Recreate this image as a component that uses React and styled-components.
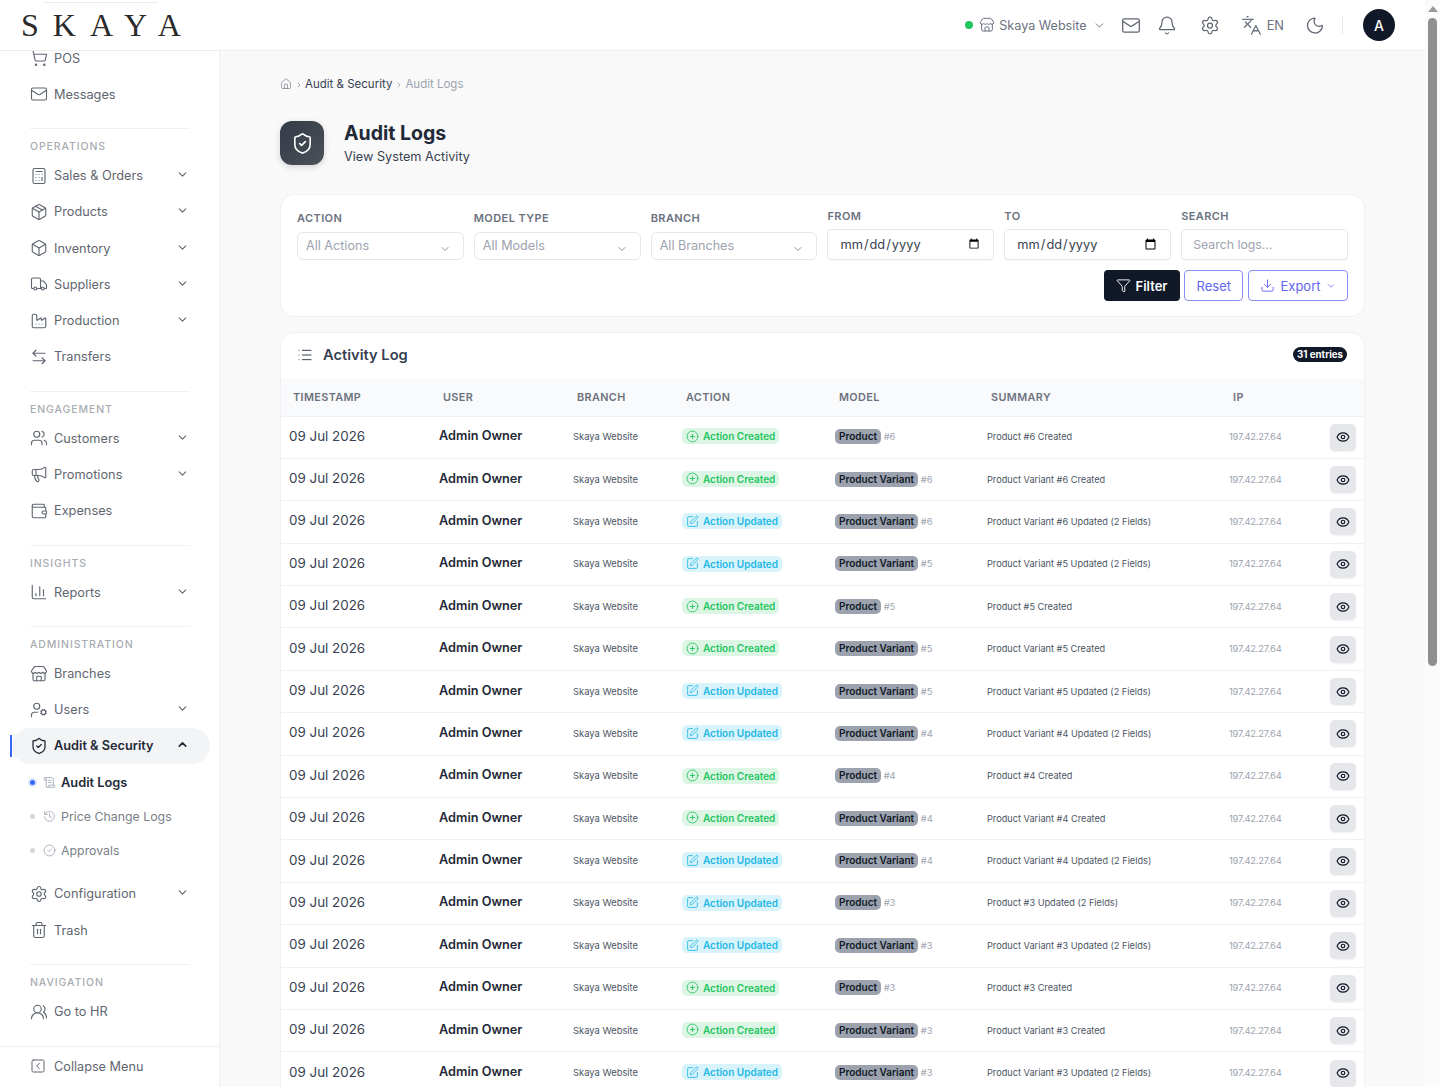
import React from 'react';
import styled, { createGlobalStyle } from 'styled-components';
import {
  ShoppingCart, Mail, Calculator, Package, Box, Truck, Factory, ArrowLeftRight, Users, Megaphone,
  Wallet, ChartColumn, Store, UserCog, ShieldCheck, ScrollText, History, CircleCheck, Settings,
  Trash2, UsersRound, SquareChevronLeft, ChevronDown, ChevronUp, ChevronRight, Bell, Languages,
  Moon, House, List, CirclePlus, SquarePen, Eye, Funnel, Download,
} from 'lucide-react';

const GlobalStyle = createGlobalStyle`
  html, body {
    margin: 0;
    height: 100%;
    overflow: hidden;
    font-family: Inter, "Liberation Sans", sans-serif;
  }
  * { box-sizing: border-box; }
`;

const NavItem = ({ icon: Icon, label, arrow }) => (
  <NavRow>
    <Icon size={18} strokeWidth={1.5} />
    <NavLabel>{label}</NavLabel>
    {arrow && <NavChevron><ChevronDown size={13} strokeWidth={2} /></NavChevron>}
  </NavRow>
);

const SubItem = ({ icon: Icon, label, active }) => (
  <SubRow $active={active}>
    <Dot $active={active} />
    <Icon size={13} strokeWidth={1.5} />
    <span>{label}</span>
  </SubRow>
);

const Sidebar = () => (
  <Side>
    <SideScroll>
      <NavItem icon={ShoppingCart} label="POS" />
      <NavItem icon={Mail} label="Messages" />
      <Section>
        <SectionLabel>Operations</SectionLabel>
        <NavItem icon={Calculator} label="Sales & Orders" arrow />
        <NavItem icon={Package} label="Products" arrow />
        <NavItem icon={Box} label="Inventory" arrow />
        <NavItem icon={Truck} label="Suppliers" arrow />
        <NavItem icon={Factory} label="Production" arrow />
        <NavItem icon={ArrowLeftRight} label="Transfers" />
      </Section>
      <Section>
        <SectionLabel>Engagement</SectionLabel>
        <NavItem icon={Users} label="Customers" arrow />
        <NavItem icon={Megaphone} label="Promotions" arrow />
        <NavItem icon={Wallet} label="Expenses" />
      </Section>
      <Section>
        <SectionLabel>Insights</SectionLabel>
        <NavItem icon={ChartColumn} label="Reports" arrow />
      </Section>
      <Section>
        <SectionLabel>Administration</SectionLabel>
        <NavItem icon={Store} label="Branches" />
        <NavItem icon={UserCog} label="Users" arrow />
        <ActiveRow>
          <ShieldCheck size={18} strokeWidth={1.7} />
          <NavLabel>Audit & Security</NavLabel>
          <NavChevron><ChevronUp size={13} strokeWidth={3} /></NavChevron>
        </ActiveRow>
        <SubList>
          <SubItem icon={ScrollText} label="Audit Logs" active />
          <SubItem icon={History} label="Price Change Logs" />
          <SubItem icon={CircleCheck} label="Approvals" />
        </SubList>
        <NavItem icon={Settings} label="Configuration" arrow />
        <NavItem icon={Trash2} label="Trash" />
      </Section>
      <Section>
        <SectionLabel>Navigation</SectionLabel>
        <NavItem icon={UsersRound} label="Go to HR" />
      </Section>
    </SideScroll>
    <CollapseBar>
      <SquareChevronLeft size={16} strokeWidth={1.5} />
      <span>Collapse Menu</span>
    </CollapseBar>
  </Side>
);

const Topbar = () => (
  <Header>
    <Logo>SKAYA</Logo>
    <HeaderTools>
      <BranchPick>
        <GreenDot />
        <Store size={16} strokeWidth={1.5} />
        <span>Skaya Website</span>
        <BranchChevron><ChevronDown size={13} strokeWidth={1.8} /></BranchChevron>
      </BranchPick>
      <ToolIcon $gap={16}><Mail size={21} strokeWidth={1.5} /></ToolIcon>
      <ToolIcon $gap={23}><Bell size={21} strokeWidth={1.5} /></ToolIcon>
      <ToolIcon $gap={21}><Settings size={21} strokeWidth={1.5} /></ToolIcon>
      <LangPick>
        <Languages size={21} strokeWidth={1.5} />
        <span>EN</span>
      </LangPick>
      <ToolIcon $gap={17}><Moon size={21} strokeWidth={1.5} /></ToolIcon>
      <ToolDivider />
      <Avatar>A</Avatar>
    </HeaderTools>
  </Header>
);

const SelectField = ({ label, placeholder }) => (
  <Field>
    <FieldLabel $low>{label}</FieldLabel>
    <SelectWrap>
      <FakeSelect defaultValue="">
        <option value="">{placeholder}</option>
      </FakeSelect>
      <SelectArrow><ChevronDown size={12} strokeWidth={1.5} /></SelectArrow>
    </SelectWrap>
  </Field>
);

const FilterCard = () => (
  <FiltersCard>
    <FilterGrid>
      <SelectField label="Action" placeholder="All Actions" />
      <SelectField label="Model Type" placeholder="All Models" />
      <SelectField label="Branch" placeholder="All Branches" />
      <Field>
        <FieldLabel>From</FieldLabel>
        <TextInput type="date" />
      </Field>
      <Field>
        <FieldLabel>To</FieldLabel>
        <TextInput type="date" />
      </Field>
      <Field>
        <FieldLabel>Search</FieldLabel>
        <SearchInput type="text" placeholder="Search logs..." />
      </Field>
    </FilterGrid>
    <FilterActions>
      <DarkButton><Funnel size={15} strokeWidth={1.5} />Filter</DarkButton>
      <OutlineButton>Reset</OutlineButton>
      <ExportButton>
        <Download size={15} strokeWidth={1.5} />Export<ChevronDown size={10} strokeWidth={1.8} />
      </ExportButton>
    </FilterActions>
  </FiltersCard>
);

const logs = [
  ['created', 'Product', 6],
  ['created', 'Product Variant', 6],
  ['updated', 'Product Variant', 6],
  ['updated', 'Product Variant', 5],
  ['created', 'Product', 5],
  ['created', 'Product Variant', 5],
  ['updated', 'Product Variant', 5],
  ['updated', 'Product Variant', 4],
  ['created', 'Product', 4],
  ['created', 'Product Variant', 4],
  ['updated', 'Product Variant', 4],
  ['updated', 'Product', 3],
  ['updated', 'Product Variant', 3],
  ['created', 'Product', 3],
  ['created', 'Product Variant', 3],
  ['updated', 'Product Variant', 3],
];

const LogRow = ({ kind, model, id }) => {
  const created = kind === 'created';
  const Icon = created ? CirclePlus : SquarePen;
  return (
    <tr>
      <DateCell>09 Jul 2026</DateCell>
      <UserCell>Admin Owner</UserCell>
      <SmallCell>Skaya Website</SmallCell>
      <SmallCell>
        <ActionBadge $created={created}>
          <Icon size={13} strokeWidth={1.6} />
          {created ? 'Action Created' : 'Action Updated'}
        </ActionBadge>
      </SmallCell>
      <SmallCell>
        <ModelBadge>{model}</ModelBadge> <RefId>#{id}</RefId>
      </SmallCell>
      <SummaryCell>{`${model} #${id} ${created ? 'Created' : 'Updated (2 Fields)'}`}</SummaryCell>
      <IpCell>197.42.27.64</IpCell>
      <EyeCell>
        <EyeButton><Eye size={14} strokeWidth={2} /></EyeButton>
      </EyeCell>
    </tr>
  );
};

const LogTable = () => (
  <LogCard>
    <LogHead>
      <LogTitle><List size={16} strokeWidth={1.5} />Activity Log</LogTitle>
      <EntryCount>31 entries</EntryCount>
    </LogHead>
    <Table>
      <colgroup>
        <col width="150" /><col width="134" /><col width="109" /><col width="153" />
        <col width="152" /><col width="242" /><col width="100" /><col />
      </colgroup>
      <thead>
        <tr>
          {['Timestamp', 'User', 'Branch', 'Action', 'Model', 'Summary', 'IP', ''].map((h) => (
            <Th key={h}>{h}</Th>
          ))}
        </tr>
      </thead>
      <tbody>
        {logs.map(([kind, model, id], i) => (
          <LogRow key={i} kind={kind} model={model} id={id} />
        ))}
      </tbody>
    </Table>
  </LogCard>
);

const App = () => (
  <>
    <GlobalStyle />
    <Shell>
      <Page>
        <Topbar />
        <Body>
          <Sidebar />
          <Main>
            <Crumbs>
              <House size={12} strokeWidth={1.3} />
              <CrumbSep><ChevronRight size={8} strokeWidth={2} /></CrumbSep>
              <CrumbLink>Audit & Security</CrumbLink>
              <CrumbSep><ChevronRight size={8} strokeWidth={1.5} /></CrumbSep>
              <CrumbCurrent>Audit Logs</CrumbCurrent>
            </Crumbs>
            <TitleRow>
              <TitleIcon><ShieldCheck size={23} strokeWidth={1.7} /></TitleIcon>
              <div>
                <PageTitle>Audit Logs</PageTitle>
                <PageSub>View System Activity</PageSub>
              </div>
            </TitleRow>
            <FilterCard />
            <LogTable />
          </Main>
        </Body>
      </Page>
      <ScrollTrack>
        <ScrollArrow />
        <ScrollThumb />
      </ScrollTrack>
    </Shell>
  </>
);

const Shell = styled.div`
  display: flex;
  height: 100vh;
  overflow: hidden;
`;
const Page = styled.div`
  flex: 1;
  min-width: 0;
  display: flex;
  flex-direction: column;
`;
const ScrollTrack = styled.div`
  width: 15px;
  background: #fbfbfb;
  display: flex;
  flex-direction: column;
  align-items: center;
  padding-top: 6px;
`;
const ScrollArrow = styled.div`
  width: 0;
  height: 0;
  border-left: 5px solid transparent;
  border-right: 5px solid transparent;
  border-bottom: 6px solid #9a9a9a;
`;
const ScrollThumb = styled.div`
  width: 9px;
  height: 648px;
  margin-top: 6px;
  border-radius: 5px;
  background: #8f8f8f;
`;

const Header = styled.header`
  height: 51px;
  flex: none;
  display: flex;
  align-items: center;
  justify-content: space-between;
  background: #fff;
  border-bottom: 1px solid #eeeeee;
  padding: 0 30px 0 21px;
  overflow: hidden;
`;
const Logo = styled.div`
  position: relative;
  font-family: "Liberation Serif", serif;
  font-size: 32px;
  line-height: 46px;
  letter-spacing: 14px;
  color: #2a2a2a;
  &::before {
    content: '';
    position: absolute;
    left: 22px;
    top: 0;
    width: 115px;
    height: 49px;
    border-top: 1px solid #eeebe3;
    border-bottom: 1px solid #eeebe3;
  }
`;
const HeaderTools = styled.div`
  display: flex;
  align-items: center;
  color: #6b7280;
`;
const BranchPick = styled.div`
  display: flex;
  align-items: center;
  gap: 4px;
  font-size: 12.6px;
  color: #6b7280;
  margin-right: 15px;
`;
const BranchChevron = styled.span`
  display: flex;
  margin-left: 2px;
`;
const GreenDot = styled.span`
  width: 8px;
  height: 8px;
  border-radius: 50%;
  background: #22c55e;
  margin-right: 2px;
`;
const ToolIcon = styled.span`
  display: flex;
  width: 20px;
  justify-content: center;
  margin-right: ${(p) => p.$gap}px;
  color: #5f6670;
`;
const LangPick = styled.div`
  display: flex;
  align-items: center;
  gap: 5px;
  font-size: 12.8px;
  margin-right: 21px;
  color: #6b7280;
`;
const ToolDivider = styled.span`
  width: 1px;
  height: 18px;
  background: #e5e7eb;
  margin-right: 20px;
`;
const Avatar = styled.div`
  width: 32px;
  height: 32px;
  border-radius: 50%;
  background: #111827;
  color: #fff;
  font-size: 14px;
  font-weight: 500;
  display: flex;
  align-items: center;
  justify-content: center;
`;

const Body = styled.div`
  flex: 1;
  min-height: 0;
  display: flex;
`;
const Side = styled.aside`
  width: 220px;
  flex: none;
  display: flex;
  flex-direction: column;
  background: #fff;
  border-right: 1px solid #eeeeee;
`;
const SideScroll = styled.nav`
  flex: 1;
  min-height: 0;
  overflow: hidden;
  padding-right: 9px;
  & > :first-child { margin-top: -11px; }
`;
const NavRow = styled.div`
  height: 36.2px;
  display: flex;
  align-items: center;
  gap: 6.5px;
  padding: 0 21px 0 29.5px;
  color: #5f6670;
  font-size: 12.75px;
`;
const NavLabel = styled.span`
  flex: 1;
`;
const NavChevron = styled.span`
  display: flex;
  margin-top: -2px;
`;
const ActiveRow = styled(NavRow)`
  position: relative;
  height: 36px;
  color: #1f2937;
  font-weight: 600;
  background: #f3f4f6;
  border-radius: 18px;
  &::before {
    content: '';
    position: absolute;
    left: -2px;
    top: 7px;
    width: 2px;
    height: 22px;
    background: #3b66f5;
  }
`;
const Section = styled.section`
  margin: 16px 20px 0 30px;
  padding-top: 9px;
  border-top: 1px solid #f1f1f3;
  & > ${NavRow} { margin-left: -30px; margin-right: -20px; }
  & > ${ActiveRow} { margin-left: -18px; padding-left: 17.5px; }
`;
const SectionLabel = styled.div`
  height: 19.3px;
  font-size: 10.5px;
  line-height: 18px;
  font-weight: 500;
  letter-spacing: 0.9px;
  text-transform: uppercase;
  color: #a8acb2;
`;
const SubList = styled.div`
  margin: 2px 0 8px;
`;
const SubRow = styled.div`
  height: 34px;
  display: flex;
  align-items: center;
  gap: 5px;
  font-size: ${(p) => (p.$active ? '12.8px' : '12.35px')};
  font-weight: ${(p) => (p.$active ? 600 : 400)};
  color: ${(p) => (p.$active ? '#1f2937' : '#7a7f87')};
  & > svg { color: #9ca3af; }
`;
const Dot = styled.span`
  width: 5px;
  height: 5px;
  border-radius: 50%;
  margin-right: 3px;
  background: ${(p) => (p.$active ? '#3b66f5' : '#d4d6da')};
  box-shadow: ${(p) => (p.$active ? '0 0 0 2px #dbe4fd' : 'none')};
`;
const CollapseBar = styled.div`
  height: 41px;
  flex: none;
  display: flex;
  align-items: center;
  gap: 8px;
  padding: 0 0 2px 30px;
  border-top: 1px solid #f1f1f3;
  color: #5f6670;
  font-size: 12.7px;
`;

const Main = styled.main`
  flex: 1;
  min-width: 0;
  overflow: hidden;
  background: #f9f9f9;
  padding: 0 60px;
`;
const Crumbs = styled.div`
  height: 65px;
  display: flex;
  align-items: center;
  gap: 2.5px;
  font-size: 11.5px;
  color: #6b7280;
`;
const CrumbSep = styled.span`
  display: flex;
  margin-top: 3px;
`;
const CrumbLink = styled.span`
  color: #374151;
`;
const CrumbCurrent = styled.span`
  color: #9ca3af;
`;
const TitleRow = styled.div`
  display: flex;
  align-items: center;
  gap: 20px;
  margin-top: 4px;
`;
const TitleIcon = styled.div`
  width: 44px;
  height: 44px;
  border-radius: 12px;
  background: linear-gradient(135deg, #343a46, #4b5159);
  box-shadow: 0 2px 6px rgba(0, 0, 0, 0.15);
  color: #fff;
  display: flex;
  align-items: center;
  justify-content: center;
`;
const PageTitle = styled.h1`
  margin: 0;
  font-size: 19.5px;
  line-height: 26px;
  font-weight: 700;
  color: #1f2937;
`;
const PageSub = styled.p`
  margin: 1px 0 -1px;
  font-size: 12.7px;
  line-height: 20px;
  color: #374151;
`;
const FiltersCard = styled.section`
  margin-top: 28px;
  height: 123px;
  background: #fff;
  border: 1px solid #f0f0f2;
  border-radius: 14px;
  padding: 14px 16px;
`;
const FilterGrid = styled.div`
  display: grid;
  grid-template-columns: repeat(6, 1fr);
  gap: 10px;
  align-items: end;
`;
const Field = styled.div`
  display: flex;
  flex-direction: column;
`;
const FieldLabel = styled.label`
  font-size: 11px;
  line-height: 14px;
  font-weight: 600;
  letter-spacing: 0.4px;
  text-transform: uppercase;
  color: #6b7280;
  margin-bottom: ${(p) => (p.$low ? '7px' : '6px')};
`;
const SelectWrap = styled.div`
  position: relative;
`;
const FakeSelect = styled.select`
  appearance: none;
  width: 100%;
  height: 28px;
  border: 1px solid #e5e7eb;
  border-radius: 6px;
  background: #fff;
  padding: 0 8px 2px;
  font-family: inherit;
  font-size: 12.6px;
  color: #9ca3af;
`;
const SelectArrow = styled.span`
  position: absolute;
  right: 13px;
  top: 11px;
  color: #6b7280;
  display: flex;
`;
const TextInput = styled.input`
  width: 100%;
  height: 31px;
  border: 1px solid #e5e7eb;
  border-radius: 4px;
  background: #fff;
  padding: 0 11px;
  font-family: inherit;
  font-size: 12.8px;
  color: #374151;
  box-shadow: 0 1px 1px rgba(0, 0, 0, 0.03);
  &::placeholder { color: #9ca3af; }
`;
const SearchInput = styled(TextInput)`
  font-size: 12.3px;
`;
const FilterActions = styled.div`
  display: flex;
  justify-content: flex-end;
  gap: 4.5px;
  margin-top: 10px;
`;
const DarkButton = styled.button`
  height: 31px;
  padding: 0 12px;
  display: flex;
  align-items: center;
  gap: 5px;
  border: none;
  border-radius: 4px;
  background: #111827;
  color: #fff;
  font-family: inherit;
  font-size: 13px;
  font-weight: 600;
`;
const OutlineButton = styled.button`
  height: 31px;
  padding: 0 11.5px;
  display: flex;
  align-items: center;
  gap: 5px;
  border: 1px solid #8b8cf5;
  border-radius: 4px;
  background: #fff;
  color: #6366f1;
  font-family: inherit;
  font-size: 13px;
`;
const ExportButton = styled(OutlineButton)`
  padding: 0 11.5px;
`;
const LogCard = styled.section`
  margin-top: 15px;
  background: #fff;
  border: 1px solid #f0f0f2;
  border-radius: 14px 14px 0 0;
`;
const LogHead = styled.div`
  height: 45px;
  display: flex;
  align-items: center;
  justify-content: space-between;
  padding: 0 17px 2px 16px;
`;
const LogTitle = styled.h2`
  margin: 0;
  display: flex;
  align-items: center;
  gap: 10px;
  font-size: 14.7px;
  font-weight: 600;
  color: #374151;
`;
const EntryCount = styled.span`
  background: #111827;
  color: #fff;
  border-radius: 8px;
  padding: 0 4px;
  font-size: 9.7px;
  line-height: 15px;
  font-weight: 700;
`;
const Table = styled.table`
  width: 100%;
  table-layout: fixed;
  border-collapse: collapse;
`;
const Th = styled.th`
  height: 38px;
  padding: 1px 12px 0;
  text-align: left;
  background: #f9fafb;
  border-bottom: 1px solid #f0f0f2;
  font-size: 10.8px;
  font-weight: 600;
  letter-spacing: 0.4px;
  text-transform: uppercase;
  color: #6b7280;
`;
const DateCell = styled.td`
  height: 42.4px;
  padding: 0 8px 3px;
  border-bottom: 1px solid #f0f0f2;
  font-size: 13.4px;
  color: #374151;
  white-space: nowrap;
`;
const UserCell = styled(DateCell)`
  font-size: 12.7px;
  font-weight: 600;
  color: #1f2937;
`;
const SmallCell = styled(DateCell)`
  padding-bottom: 1px;
  font-size: 9.4px;
  color: #4b5563;
`;
const SummaryCell = styled(SmallCell)`
  font-size: 9.2px;
`;
const IpCell = styled(SmallCell)`
  color: #9ca3af;
  letter-spacing: -0.2px;
`;
const EyeCell = styled(SmallCell)`
  padding: 0;
`;
const ActionBadge = styled.span`
  display: inline-flex;
  align-items: center;
  gap: 4px;
  height: 16px;
  padding: 0 4px;
  border-radius: 5px;
  font-size: 10px;
  font-weight: 600;
  background: ${(p) => (p.$created ? '#dcf5e4' : '#d9f3fb')};
  color: ${(p) => (p.$created ? '#22c55e' : '#22b8e6')};
`;
const ModelBadge = styled.span`
  display: inline-block;
  padding: 0 4px;
  line-height: 15px;
  border-radius: 5px;
  font-size: 10px;
  font-weight: 600;
  background: #9ca3af;
  color: #111827;
`;
const RefId = styled.span`
  color: #9ca3af;
`;
const EyeButton = styled.button`
  width: 26px;
  height: 27px;
  margin-left: 9px;
  border: none;
  border-radius: 5px;
  background: #e5e7eb;
  color: #111827;
  display: flex;
  align-items: center;
  justify-content: center;
  box-shadow: 0 1px 2px rgba(0, 0, 0, 0.06);
`;

export default App;
